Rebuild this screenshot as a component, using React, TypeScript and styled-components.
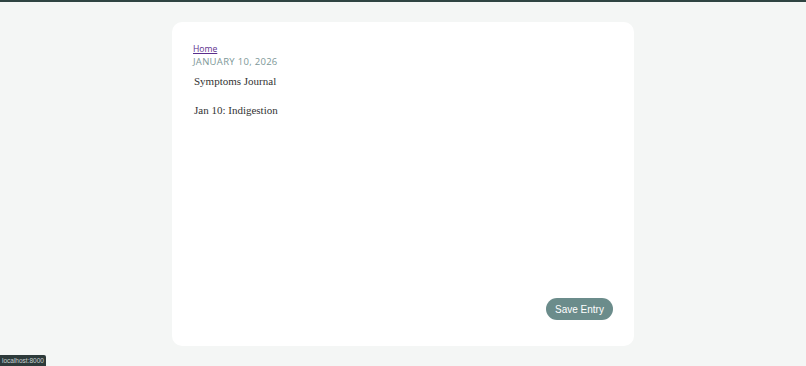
import React from "react";
import styled, { createGlobalStyle } from "styled-components";

const GlobalStyle = createGlobalStyle`
  html, body {
    margin: 0;
    padding: 0;
    background: #f4f6f5;
    height: 100%;
  }
  body {
    border-top: 2px solid #2f4442;
    box-sizing: border-box;
    font-family: "Open Sans", sans-serif;
  }
`;

const Page = styled.main`
  display: flex;
  justify-content: center;
  padding-top: 20px;
`;

const Card = styled.section`
  width: 462px;
  height: 324px;
  box-sizing: border-box;
  background: #ffffff;
  border-radius: 10px;
  padding: 22px 21px 26px 21px;
  display: flex;
  flex-direction: column;
`;

const HomeLink = styled.a`
  font-family: "Open Sans", sans-serif;
  font-size: 8.6px;
  line-height: 11px;
  color: #5a2e8c;
  text-decoration: underline;
  align-self: flex-start;
`;

const DateLabel = styled.div`
  font-family: "Open Sans", sans-serif;
  font-size: 9.5px;
  line-height: 13px;
  letter-spacing: 0.3px;
  color: #7d9797;
  text-transform: uppercase;
`;

const Entry = styled.textarea`
  flex: 1;
  border: none;
  outline: none;
  resize: none;
  padding: 0 1px;
  margin-top: 5.5px;
  font-family: "Liberation Serif", "Times New Roman", serif;
  font-size: 11px;
  line-height: 14.5px;
  color: #333333;
  background: transparent;
`;

const Footer = styled.div`
  display: flex;
  justify-content: flex-end;
`;

const SaveButton = styled.button`
  height: 22px;
  width: 67px;
  border: none;
  border-radius: 11px;
  background: #6b8c8b;
  color: #ffffff;
  font-family: "Liberation Sans", Arial, sans-serif;
  font-size: 10px;
  padding: 0;
  cursor: pointer;
`;

const StatusBar = styled.div`
  position: fixed;
  left: 0;
  bottom: 0;
  height: 11px;
  padding: 0 2px;
  background: #2d3a3a;
  color: #c9d2d2;
  font-family: "Liberation Sans", Arial, sans-serif;
  font-size: 6.5px;
  line-height: 11px;
  border-top-right-radius: 2px;
`;

const App = () => {
  return (
    <>
      <GlobalStyle />
      <Page>
        <Card>
          <HomeLink href="#">Home</HomeLink>
          <DateLabel>January 10, 2026</DateLabel>
          <Entry
            defaultValue={"Symptoms Journal\n\nJan 10: Indigestion"}
            spellCheck={false}
          />
          <Footer>
            <SaveButton>Save Entry</SaveButton>
          </Footer>
        </Card>
      </Page>
      <StatusBar>localhost:8000</StatusBar>
    </>
  );
};

export default App;
